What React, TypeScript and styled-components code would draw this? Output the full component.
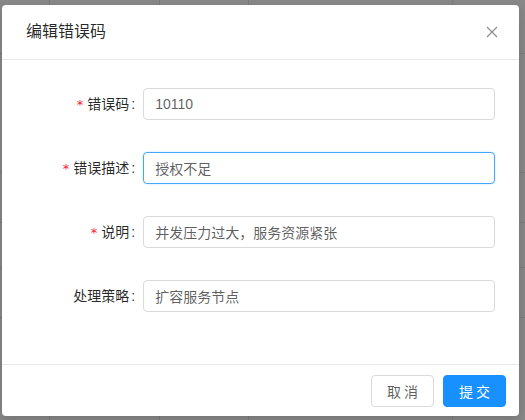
import React from 'react';
import styled, { createGlobalStyle } from 'styled-components';

const GlobalStyle = createGlobalStyle`
  html, body {
    margin: 0;
    padding: 0;
  }
  body {
    width: 525px;
    height: 420px;
    overflow: hidden;
    font-family: "Liberation Sans", "Noto Sans CJK SC", sans-serif;
    font-size: 14px;
    background-color: #888888;
    background-image:
      linear-gradient(#7b7b7b, #7b7b7b),
      linear-gradient(#7b7b7b, #7b7b7b),
      linear-gradient(#7b7b7b, #7b7b7b),
      linear-gradient(#7b7b7b, #7b7b7b),
      linear-gradient(#7b7b7b, #7b7b7b),
      linear-gradient(#7b7b7b, #7b7b7b),
      linear-gradient(#7b7b7b, #7b7b7b),
      linear-gradient(#7b7b7b, #7b7b7b),
      linear-gradient(#7b7b7b, #7b7b7b);
    background-repeat: no-repeat;
    background-size: 1px 100%, 1px 100%, 1px 100%, 1px 100%, 100% 1px, 100% 1px, 100% 1px, 100% 1px, 100% 1px;
    background-position: 49px 0, 159px 0, 248px 0, 452px 0, 0 53px, 0 172px, 0 222px, 0 267px, 0 317px;
  }
`;

const Page = styled.div`
  padding: 5px 6px 0 2px;
`;

const Modal = styled.div`
  background: #fff;
  border-radius: 4px;
  box-shadow: 0 4px 12px rgba(0, 0, 0, 0.15);
  overflow: hidden;
`;

const Header = styled.div`
  display: flex;
  align-items: center;
  justify-content: space-between;
  padding: 16px 24px;
  border-bottom: 1px solid #e8e8e8;
`;

const Title = styled.div`
  font-size: 16px;
  line-height: 22px;
  font-weight: 400;
  color: rgba(0, 0, 0, 0.85);
`;

const Close = styled.button`
  display: flex;
  align-items: center;
  justify-content: center;
  width: 12px;
  height: 22px;
  padding: 0;
  margin-right: -3px;
  border: 0;
  background: none;
  color: rgba(0, 0, 0, 0.45);
  cursor: pointer;
`;

const Body = styled.div`
  padding: 24px;
`;

const FormItem = styled.div`
  display: grid;
  grid-template-columns: 25% 75%;
  line-height: 40px;
  height: 40px;
  margin-bottom: 24px;
`;

const Label = styled.label<{ $required?: boolean }>`
  text-align: right;
  white-space: nowrap;
  color: rgba(0, 0, 0, 0.85);
  font-size: 14px;
  &::before {
    content: ${p => (p.$required ? "'*'" : "none")};
    display: inline-block;
    margin-right: 4px;
    color: #f5222d;
    font-family: "DejaVu Sans", sans-serif;
    font-size: 13px;
    line-height: 1;
  }
  &::after {
    content: ':';
    margin: 0 8px 0 2px;
  }
`;

const Control = styled.div`
  display: flex;
  align-items: center;
`;

const Input = styled.input<{ $focused?: boolean }>`
  box-sizing: border-box;
  width: 100%;
  height: 32px;
  padding: 4px 11px;
  border: 1px solid ${p => (p.$focused ? '#40a9ff' : '#d9d9d9')};
  border-radius: 4px;
  box-shadow: ${p => (p.$focused ? '0 0 0 1px rgba(24, 144, 255, 0.08)' : 'none')};
  font-family: "Liberation Sans", "Noto Sans CJK SC", sans-serif;
  font-size: 14px;
  color: rgba(0, 0, 0, 0.65);
  background: #fff;
  outline: none;
`;

const Footer = styled.div`
  display: flex;
  justify-content: flex-end;
  gap: 9px;
  padding: 10px 13px 9px 16px;
  border-top: 1px solid #e8e8e8;
`;

const Button = styled.button<{ $primary?: boolean }>`
  height: 32px;
  padding: 0 12px 0 15px;
  border-radius: 4px;
  border: 1px solid ${p => (p.$primary ? '#1890ff' : '#d9d9d9')};
  background: ${p => (p.$primary ? '#1890ff' : '#fff')};
  color: ${p => (p.$primary ? '#fff' : 'rgba(0, 0, 0, 0.65)')};
  font-family: "Liberation Sans", "Noto Sans CJK SC", sans-serif;
  font-size: 14px;
  letter-spacing: 3px;
  cursor: pointer;
`;

const fields = [
  { label: '错误码', value: '10110', required: true },
  { label: '错误描述', value: '授权不足', required: true, focused: true },
  { label: '说明', value: '并发压力过大，服务资源紧张', required: true },
  { label: '处理策略', value: '扩容服务节点' },
];

export default function App() {
  return (
    <>
      <GlobalStyle />
      <Page>
        <Modal>
          <Header>
            <Title>编辑错误码</Title>
            <Close aria-label="关闭">
              <svg width="12" height="12" viewBox="0 0 12 12">
                <path d="M1 1L11 11M11 1L1 11" stroke="currentColor" strokeWidth="1.2" fill="none" />
              </svg>
            </Close>
          </Header>
          <Body>
            {fields.map(f => (
              <FormItem key={f.label}>
                <Label $required={f.required}>{f.label}</Label>
                <Control>
                  <Input $focused={f.focused} defaultValue={f.value} />
                </Control>
              </FormItem>
            ))}
          </Body>
          <Footer>
            <Button>取消</Button>
            <Button $primary>提交</Button>
          </Footer>
        </Modal>
      </Page>
    </>
  );
}
